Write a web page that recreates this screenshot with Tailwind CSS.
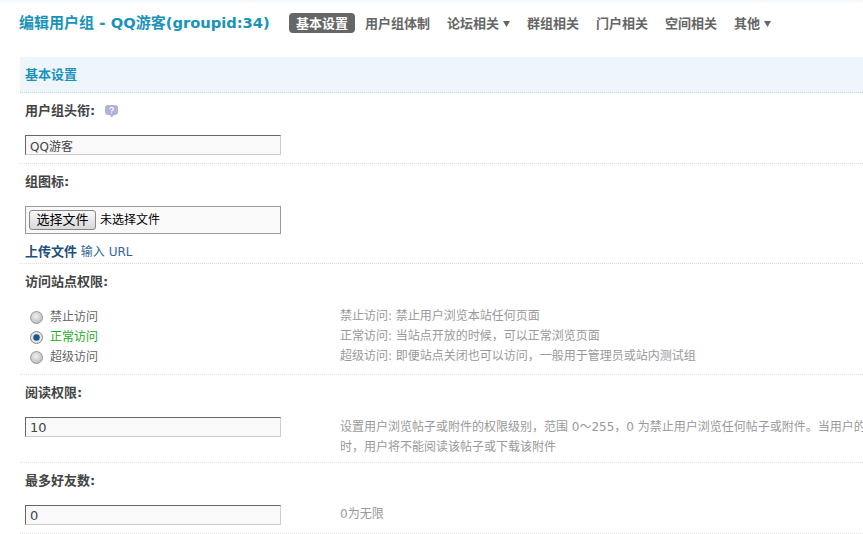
<!DOCTYPE html>
<html lang="zh-CN">
<head>
  <meta charset="UTF-8" />
  <title>编辑用户组</title>
  <script src="https://cdn.jsdelivr.net/npm/@tailwindcss/browser@4"></script>
</head>
<body class="bg-white overflow-hidden h-[534px] w-[863px] text-[12px] text-[#666] font-['DejaVu_Sans','Noto_Sans_CJK_SC',sans-serif]">

  <div class="h-[4px] bg-gradient-to-b from-[#f0f8fd] to-white"></div>

  <!-- title + nav -->
  <div class="h-[53px] pl-[19px] pt-[9px] flex items-start">
    <h1 class="h-[20px] leading-[20px] w-[270px] shrink-0 whitespace-nowrap text-[15px] font-bold text-[#1a93bb]">编辑用户组 - <span class="text-[14.7px]">QQ</span>游客<span class="text-[14.7px]">(groupid:34)</span></h1>
    <ul class="flex gap-[3px] text-[13px] font-bold leading-[21px] h-[20px] whitespace-nowrap">
      <li class="px-[7px] h-[20px] rounded-[4px] bg-[#666] text-white">基本设置</li>
      <li class="px-[7px]">用户组体制</li>
      <li class="px-[7px] flex items-center h-[21px]">论坛相关<svg class="ml-[4px]" width="7" height="7" viewBox="0 0 7 7"><path d="M0 1h7L3.5 7z" fill="#666"/></svg></li>
      <li class="px-[7px]">群组相关</li>
      <li class="px-[7px]">门户相关</li>
      <li class="px-[7px]">空间相关</li>
      <li class="px-[7px] flex items-center h-[21px]">其他<svg class="ml-[4px]" width="7" height="7" viewBox="0 0 7 7"><path d="M0 1h7L3.5 7z" fill="#666"/></svg></li>
    </ul>
  </div>

  <div class="ml-[20px] w-[843px]">
    <!-- section header -->
    <div class="h-[36px] pl-[5px] bg-[#eef5fc] border-b border-dotted border-[#c5d5dd] text-[13px] leading-[35px] font-bold text-[#1a93bb]">基本设置</div>

    <!-- 用户组头衔 -->
    <div class="h-[71px] pl-[5px] border-b border-dotted border-[#ddd]">
      <div class="h-[42px] pt-[8px] flex items-start gap-[9px]">
        <span class="text-[13px] leading-[20px] font-bold text-[#444]">用户组头衔:</span>
        <svg class="mt-[3px]" width="15" height="15" viewBox="0 0 15 15">
          <path d="M4 1h7a3 3 0 0 1 3 3v4a3 3 0 0 1-3 3h-1l-2.5 2.5L6 11H4a3 3 0 0 1-3-3V4a3 3 0 0 1 3-3z" fill="#aeb2dc"/>
          <path d="M5.8 4.8a1.8 1.6 0 1 1 2.6 1.5c-.6.4-.9.6-.9 1.2M7.5 8.6v1" fill="none" stroke="#fff" stroke-width="1.2"/>
        </svg>
      </div>
      <input type="text" value="QQ游客" class="block w-[256px] h-[20px] px-[4px] bg-[#f9f9f9] border border-[#666] border-r-[#ccc] border-b-[#ccc] text-[12px] leading-[18px] text-[#444] outline-none" />
    </div>

    <!-- 组图标 -->
    <div class="h-[100px] pl-[5px] border-b border-dotted border-[#ddd]">
      <div class="h-[42px] pt-[8px] text-[13px] leading-[20px] font-bold text-[#444]">组图标:</div>
      <div class="w-[256px] h-[28px] px-[3px] flex items-center gap-[4px] bg-[#f9f9f9] border border-[#999] text-black">
        <span class="w-[67px] h-[20px] text-center text-[13px] leading-[18px] border border-[#888] rounded-[3px] bg-gradient-to-b from-[#f8f8f8] to-[#d8d8d8]">选择文件</span>
        <span class="text-[12px]">未选择文件</span>
      </div>
      <div class="mt-[8px] leading-[20px] text-[#369] whitespace-nowrap">
        <a class="text-[13px] font-bold text-[#1d4f80]">上传文件</a>
        <a class="text-[12px]">输入 URL</a>
      </div>
    </div>

    <!-- 访问站点权限 -->
    <div class="h-[111px] pl-[5px] border-b border-dotted border-[#ddd]">
      <div class="h-[42px] pt-[8px] text-[13px] leading-[20px] font-bold text-[#444]">访问站点权限:</div>
      <div class="grid grid-cols-[315px_1fr] pt-[1px] leading-[20px]">
        <ul class="pl-[5px]">
          <li class="flex items-center gap-[7px] h-[20px]">
            <svg width="13" height="13" viewBox="0 0 13 13"><defs><radialGradient id="off" cx="0.45" cy="0.4" r="0.6"><stop offset="0" stop-color="#f2f2f2"/><stop offset="1" stop-color="#bbb"/></radialGradient></defs><circle cx="6.5" cy="6.5" r="6" fill="url(#off)" stroke="#999"/></svg>
            <span>禁止访问</span>
          </li>
          <li class="flex items-center gap-[7px] h-[20px] text-[#22aa22]">
            <svg width="13" height="13" viewBox="0 0 13 13"><circle cx="6.5" cy="6.5" r="6" fill="#e4e4e4" stroke="#888"/><circle cx="6.5" cy="6.5" r="3.2" fill="#16578f"/></svg>
            <span>正常访问</span>
          </li>
          <li class="flex items-center gap-[7px] h-[20px]">
            <svg width="13" height="13" viewBox="0 0 13 13"><circle cx="6.5" cy="6.5" r="6" fill="url(#off)" stroke="#999"/></svg>
            <span>超级访问</span>
          </li>
        </ul>
        <div class="-mt-[1px] text-[#999] whitespace-nowrap">
          <p>禁止访问: 禁止用户浏览本站任何页面</p>
          <p>正常访问: 当站点开放的时候，可以正常浏览页面</p>
          <p>超级访问: 即便站点关闭也可以访问，一般用于管理员或站内测试组</p>
        </div>
      </div>
    </div>

    <!-- 阅读权限 -->
    <div class="h-[88px] pl-[5px] border-b border-dotted border-[#ddd]">
      <div class="h-[42px] pt-[8px] text-[13px] leading-[20px] font-bold text-[#444]">阅读权限:</div>
      <div class="grid grid-cols-[315px_1fr]">
        <input type="text" value="10" class="block w-[256px] h-[20px] px-[4px] bg-[#f9f9f9] border border-[#666] border-r-[#ccc] border-b-[#ccc] text-[13px] leading-[18px] text-[#444] outline-none" />
        <p class="text-[#999] leading-[20px] whitespace-nowrap">设置用户浏览帖子或附件的权限级别，范围 0～255，0 为禁止用户浏览任何帖子或附件。当用户的<br />时，用户将不能阅读该帖子或下载该附件</p>
      </div>
    </div>

    <!-- 最多好友数 -->
    <div class="h-[71px] pl-[5px] border-b border-dotted border-[#ddd]">
      <div class="h-[42px] pt-[8px] text-[13px] leading-[20px] font-bold text-[#444]">最多好友数:</div>
      <div class="grid grid-cols-[315px_1fr]">
        <input type="text" value="0" class="block w-[256px] h-[20px] px-[4px] bg-[#f9f9f9] border border-[#666] border-r-[#ccc] border-b-[#ccc] text-[13px] leading-[18px] text-[#444] outline-none" />
        <p class="-mt-[1px] text-[#999] leading-[20px]">0为无限</p>
      </div>
    </div>
  </div>

</body>
</html>
